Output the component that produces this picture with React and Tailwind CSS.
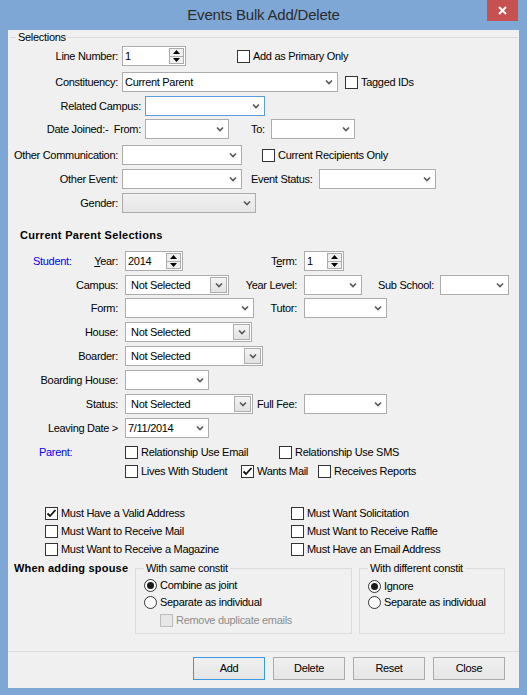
import React from 'react';

function Chevron() {
  return (
    <svg width="8" height="6" viewBox="0 0 8 6">
      <path d="M1 1.5 L4 4.5 L7 1.5" fill="none" stroke="#5b5b5b" strokeWidth="1.7" />
    </svg>
  );
}

function Combo({ w, value, focus, disabled, boxed }) {
  const border = focus ? 'border-[#569de5]' : 'border-[#acacac]';
  const bg = disabled ? 'bg-linear-to-b from-[#f2f2f2] to-[#e5e5e5]' : 'bg-white';
  return (
    <div className={`${w} h-[20px] shrink-0 flex items-center border ${border} ${bg}`}>
      <span className={`flex-1 truncate ${boxed ? 'pl-[5px]' : 'pl-[2px]'}`}>{value}</span>
      {boxed ? (
        <span className="mr-[1px] w-[17px] h-[16px] border border-[#acacac] bg-linear-to-b from-[#f4f4f4] to-[#e2e2e2] flex items-center justify-center">
          <Chevron />
        </span>
      ) : (
        <span className="w-[17px] flex justify-center">
          <Chevron />
        </span>
      )}
    </div>
  );
}

function Spin({ w, value }) {
  return (
    <div className={`${w} h-[20px] shrink-0 flex border border-[#acacac] bg-white`}>
      <span className="flex-1 pl-[2px] flex items-center">{value}</span>
      <div className="w-[15px] my-[1px] mr-[1px] flex flex-col border border-[#acacac] bg-[#efefef]">
        <span className="flex-1 flex items-center justify-center border-b border-[#acacac]">
          <svg width="7" height="4" viewBox="0 0 7 4"><path d="M0 4 L3.5 0 L7 4Z" fill="#000" /></svg>
        </span>
        <span className="flex-1 flex items-center justify-center">
          <svg width="7" height="4" viewBox="0 0 7 4"><path d="M0 0 L3.5 4 L7 0Z" fill="#000" /></svg>
        </span>
      </div>
    </div>
  );
}

function Check({ checked, disabled, children, className = '' }) {
  return (
    <div className={`flex items-center h-[14px] shrink-0 ${className}`}>
      <span
        className={`w-[13px] h-[13px] shrink-0 border flex items-center justify-center ${
          disabled ? 'border-[#bcbcbc] bg-[#e6e6e6]' : 'border-[#333] bg-white'
        }`}
      >
        {checked && (
          <svg width="11" height="11" viewBox="0 0 11 11">
            <path d="M1.5 5.5 L4 8 L9.5 2" fill="none" stroke="#111" strokeWidth="1.8" />
          </svg>
        )}
      </span>
      <span className={`ml-[3px] whitespace-nowrap ${disabled ? 'text-[#8d8d8d]' : ''}`}>{children}</span>
    </div>
  );
}

function Radio({ checked, children, className = '' }) {
  return (
    <div className={`flex items-center h-[14px] ${className}`}>
      <span className="w-[13px] h-[13px] shrink-0 rounded-full border border-[#333] bg-white flex items-center justify-center">
        {checked && <span className="w-[7px] h-[7px] rounded-full bg-[#1a1a1a]" />}
      </span>
      <span className="ml-[3px] whitespace-nowrap">{children}</span>
    </div>
  );
}

function Label({ w = 'w-[110px]', children }) {
  return <div className={`${w} shrink-0 text-right whitespace-pre`}>{children}</div>;
}

function Btn({ children, primary }) {
  return (
    <button
      className={`w-[72px] h-[23px] border bg-linear-to-b from-[#f0f0f0] to-[#e5e5e5] ${
        primary ? 'border-[#3c96e6]' : 'border-[#acacac]'
      }`}
    >
      {children}
    </button>
  );
}

export default function App() {
  return (
    <div className="w-[527px] h-[695px] bg-[#7ea7d6] flex flex-col font-['Liberation_Sans',Arial,sans-serif] text-[11px] tracking-[-0.3px] text-black">
      {/* title bar */}
      <div className="relative h-[30px] shrink-0 flex items-center justify-center">
        <span className="text-[15px] tracking-[-0.2px] text-[#2b2b2b]">Events Bulk Add/Delete</span>
        <div className="absolute top-0 right-[9px] w-[31px] h-[21px] bg-[#c75050] flex items-center justify-center">
          <svg width="9" height="9" viewBox="0 0 9 9">
            <path d="M1 1 L8 8 M8 1 L1 8" stroke="#fff" strokeWidth="2" />
          </svg>
        </div>
      </div>

      {/* client */}
      <div className="ml-[8px] w-[511px] h-[658px] bg-[#f0f0f0] flex flex-col">
        {/* Selections */}
        <div className="h-[14px] flex items-center ml-[2px] mr-[1px]">
          <span className="w-[6px] border-t border-[#dcdcdc]" />
          <span className="px-[2px]">Selections</span>
          <span className="flex-1 border-t border-[#dcdcdc]" />
        </div>

        <div className="mt-[2px] h-[20px] flex items-center">
          <Label>Line Number:</Label>
          <div className="ml-[4px]"><Spin w="w-[64px]" value="1" /></div>
          <Check className="ml-[51px]">Add as Primary Only</Check>
        </div>

        <div className="mt-[6px] h-[20px] flex items-center">
          <Label>Constituency:</Label>
          <div className="ml-[4px]"><Combo w="w-[216px]" value="Current Parent" /></div>
          <Check className="ml-[7px]">Tagged IDs</Check>
        </div>

        <div className="mt-[4px] h-[20px] flex items-center">
          <Label w="w-[133px]">Related Campus:</Label>
          <div className="ml-[4px]"><Combo w="w-[120px]" focus /></div>
        </div>

        <div className="mt-[3px] h-[20px] flex items-center">
          <Label w="w-[133px]">Date Joined:-  From:</Label>
          <div className="ml-[4px]"><Combo w="w-[84px]" /></div>
          <span className="ml-[22px] w-[20px]">To:</span>
          <Combo w="w-[84px]" />
        </div>

        <div className="mt-[6px] h-[20px] flex items-center">
          <Label>Other Communication:</Label>
          <div className="ml-[4px]"><Combo w="w-[120px]" /></div>
          <Check className="ml-[20px]">Current Recipients Only</Check>
        </div>

        <div className="mt-[4px] h-[20px] flex items-center">
          <Label>Other Event:</Label>
          <div className="ml-[4px]"><Combo w="w-[120px]" /></div>
          <span className="ml-[9px] w-[68px]">Event Status:</span>
          <Combo w="w-[117px]" />
        </div>

        <div className="mt-[4px] h-[20px] flex items-center">
          <Label>Gender:</Label>
          <div className="ml-[4px]"><Combo w="w-[134px]" disabled /></div>
        </div>

        {/* Current Parent Selections */}
        <div className="mt-[15px] ml-[12px] h-[14px] flex items-center font-bold tracking-[0.3px]">
          Current Parent Selections
        </div>

        <div className="mt-[9px] h-[20px] flex items-center">
          <div className="w-[110px] shrink-0 flex justify-between pl-[25px]">
            <span className="text-[#0000ff]">Student:</span>
            <span><span className="underline">Y</span>ear:</span>
          </div>
          <div className="ml-[7px] w-[172px] flex items-center">
            <Spin w="w-[58px]" value="2014" />
            <span className="flex-1 text-right">T<span className="underline">e</span>rm:</span>
          </div>
          <div className="ml-[7px]"><Spin w="w-[40px]" value="1" /></div>
        </div>

        <div className="mt-[4px] h-[20px] flex items-center">
          <Label>Campus:</Label>
          <div className="ml-[7px] w-[172px] flex items-center">
            <Combo w="w-[104px]" value="Not Selected" boxed />
            <span className="flex-1 text-right">Year Level:</span>
          </div>
          <div className="ml-[7px]"><Combo w="w-[58px]" /></div>
          <span className="w-[78px] pr-[6px] text-right">Sub School:</span>
          <Combo w="w-[69px]" />
        </div>

        <div className="mt-[3px] h-[20px] flex items-center">
          <Label>Form:</Label>
          <div className="ml-[7px] w-[172px] flex items-center">
            <Combo w="w-[129px]" />
            <span className="flex-1 text-right">Tutor:</span>
          </div>
          <div className="ml-[7px]"><Combo w="w-[83px]" /></div>
        </div>

        <div className="mt-[4px] h-[20px] flex items-center">
          <Label>House:</Label>
          <div className="ml-[7px]"><Combo w="w-[127px]" value="Not Selected" boxed /></div>
        </div>

        <div className="mt-[4px] h-[20px] flex items-center">
          <Label>Boarder:</Label>
          <div className="ml-[7px]"><Combo w="w-[138px]" value="Not Selected" boxed /></div>
        </div>

        <div className="mt-[4px] h-[20px] flex items-center">
          <Label>Boarding House:</Label>
          <div className="ml-[7px]"><Combo w="w-[84px]" /></div>
        </div>

        <div className="mt-[4px] h-[20px] flex items-center">
          <Label>Status:</Label>
          <div className="ml-[7px] w-[172px] flex items-center">
            <Combo w="w-[128px]" value="Not Selected" boxed />
            <span className="flex-1 text-right">Full Fee:</span>
          </div>
          <div className="ml-[7px]"><Combo w="w-[83px]" /></div>
        </div>

        <div className="mt-[4px] h-[20px] flex items-center">
          <Label>Leaving Date &gt;</Label>
          <div className="ml-[7px]"><Combo w="w-[84px]" value="7/11/2014" /></div>
        </div>

        <div className="mt-[7px] h-[14px] flex items-center">
          <div className="w-[110px] shrink-0 pl-[31px] text-[#0000ff]">Parent:</div>
          <div className="ml-[7px] w-[154px]"><Check>Relationship Use Email</Check></div>
          <Check>Relationship Use SMS</Check>
        </div>

        <div className="mt-[5px] h-[14px] flex items-center">
          <div className="w-[110px] shrink-0" />
          <div className="ml-[7px] w-[116px]"><Check>Lives With Student</Check></div>
          <div className="w-[77px]"><Check checked>Wants Mail</Check></div>
          <Check>Receives Reports</Check>
        </div>

        {/* must-have options */}
        <div className="mt-[28px] ml-[37px] grid grid-cols-[246px_1fr] gap-y-[4px]">
          <Check checked>Must Have a Valid Address</Check>
          <Check>Must Want Solicitation</Check>
          <Check>Must Want to Receive Mail</Check>
          <Check>Must Want to Receive Raffle</Check>
          <Check>Must Want to Receive a Magazine</Check>
          <Check>Must Have an Email Address</Check>
        </div>

        {/* spouse */}
        <div className="mt-[5px] h-[73px] flex">
          <div className="w-[127px] shrink-0 pl-[6px] h-[14px] flex items-center font-bold tracking-[0.2px]">
            When adding spouse
          </div>
          <fieldset className="w-[217px] h-[73px] border border-[#dcdcdc] px-[8px]">
            <legend className="px-[2px] h-[14px] leading-[14px]">With same constit</legend>
            <Radio checked className="mt-[3px]">Combine as joint</Radio>
            <Radio className="mt-[3px]">Separate as individual</Radio>
            <Check disabled className="mt-[4px] ml-[16px]">Remove duplicate emails</Check>
          </fieldset>
          <fieldset className="ml-[7px] w-[146px] h-[73px] border border-[#dcdcdc] px-[8px]">
            <legend className="px-[2px] h-[14px] leading-[14px]">With different constit</legend>
            <Radio checked className="mt-[4px]">Ignore</Radio>
            <Radio className="mt-[2px]">Separate as individual</Radio>
          </fieldset>
        </div>

        <div className="mt-[17px] border-t border-[#dcdcdc]" />

        <div className="mt-[5px] flex justify-end gap-[8px] pr-[14px]">
          <Btn primary>Add</Btn>
          <Btn>Delete</Btn>
          <Btn>Reset</Btn>
          <Btn>Close</Btn>
        </div>
      </div>
    </div>
  );
}
